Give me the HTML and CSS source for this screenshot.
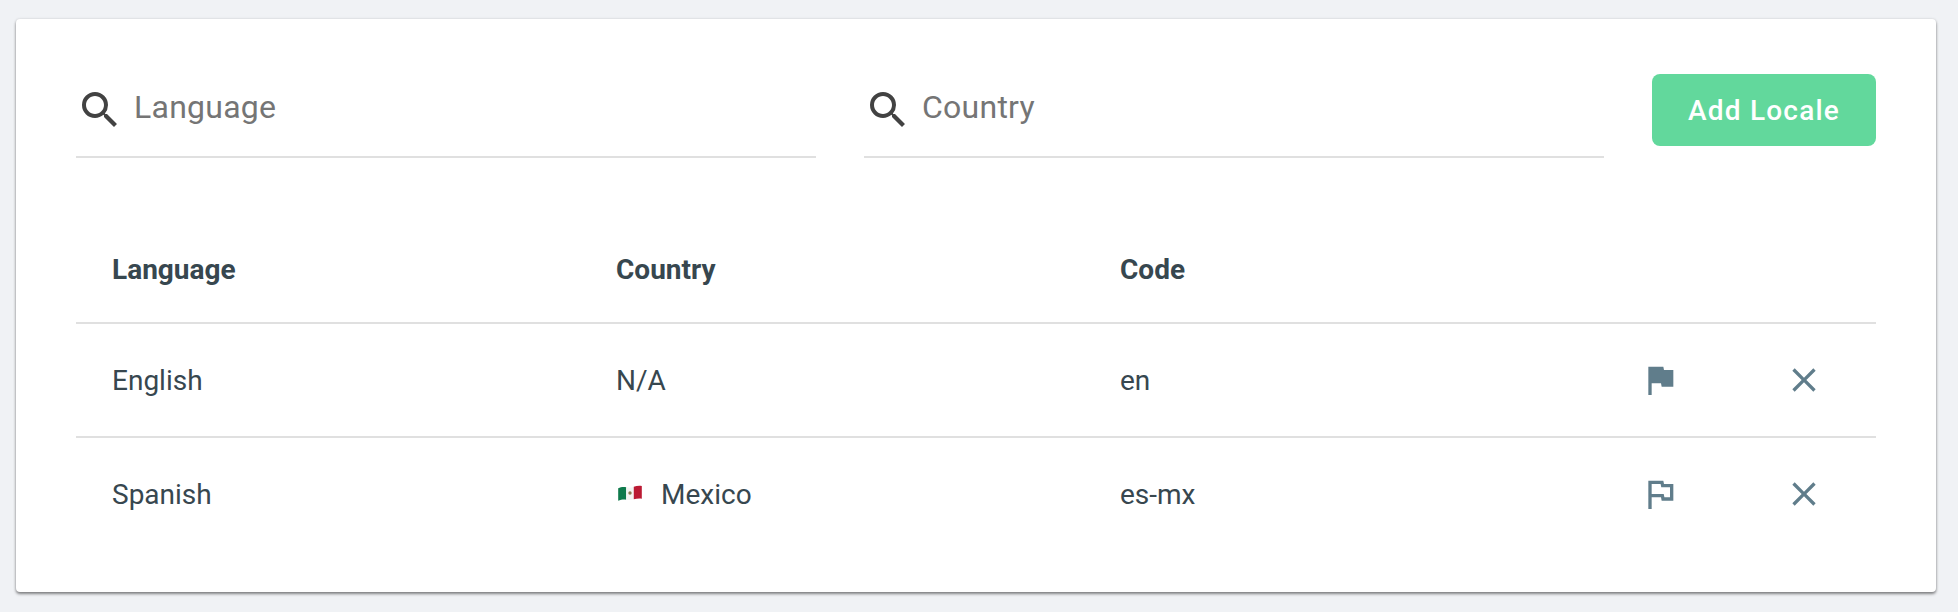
FILE: index.html
```html
<!DOCTYPE html>
<html lang="en">
<head>
<meta charset="utf-8">
<title>Locales</title>
<link rel="stylesheet" href="styles.css">
</head>
<body>
<main class="card">
  <div class="filters">
    <label class="search">
      <svg class="search-icon" viewBox="0 0 24 24"><path d="M15.5 14h-.79l-.28-.27A6.47 6.47 0 0 0 16 9.5 6.5 6.5 0 1 0 9.5 16c1.61 0 3.09-.59 4.23-1.57l.27.28v.79l5 4.99L20.49 19l-4.99-5zm-6 0C7.01 14 5 11.99 5 9.5S7.01 5 9.5 5 14 7.01 14 9.5 11.99 14 9.5 14z"/></svg>
      <input class="search-input" type="text" placeholder="Language">
    </label>
    <label class="search">
      <svg class="search-icon" viewBox="0 0 24 24"><path d="M15.5 14h-.79l-.28-.27A6.47 6.47 0 0 0 16 9.5 6.5 6.5 0 1 0 9.5 16c1.61 0 3.09-.59 4.23-1.57l.27.28v.79l5 4.99L20.49 19l-4.99-5zm-6 0C7.01 14 5 11.99 5 9.5S7.01 5 9.5 5 14 7.01 14 9.5 11.99 14 9.5 14z"/></svg>
      <input class="search-input" type="text" placeholder="Country">
    </label>
    <button class="add-btn" type="button">Add Locale</button>
  </div>
  <div class="table">
    <div class="row head">
      <div>Language</div><div>Country</div><div>Code</div>
    </div>
    <div class="row">
      <div>English</div><div>N/A</div><div>en</div>
      <svg class="act" viewBox="0 0 24 24"><path d="M14.4 6L14 4H5v17h2v-7h5.6l.4 2h7V6z"/></svg>
      <svg class="act" viewBox="0 0 24 24"><path d="M19 6.41L17.59 5 12 10.59 6.41 5 5 6.41 10.59 12 5 17.59 6.41 19 12 13.41 17.59 19 19 17.59 13.41 12z"/></svg>
    </div>
    <div class="row last">
      <div>Spanish</div>
      <div class="country">
        <svg class="mx" viewBox="0 0 25 18"><path fill="#0f7a4c" d="M0 3.5C3 2 6 2 8.500 2.500v13C6 15 3 15.200 0 16.800z"/><path fill="#f4f4f2" d="M8.500 2.500c2.700.5 5.500.4 8-.6v13.200c-2.500 1-5.300 1-8 .4z"/><path fill="#bb1a33" d="M16.500 1.900C19 1 22 .4 25 1v13.500c-3-.5-6 0-8.500.6z"/><circle cx="12.500" cy="8.500" r="1.800" fill="#8a7a50"/></svg>
        <span>Mexico</span>
      </div>
      <div>es-mx</div>
      <svg class="act" viewBox="0 0 24 24"><path d="M12.360 6l.4 2H18v6h-3.360l-.4-2H7V6h5.360M14 4H5v17h2v-7h5.600l.4 2h7V6h-5.600L14 4z"/></svg>
      <svg class="act" viewBox="0 0 24 24"><path d="M19 6.410L17.590 5 12 10.590 6.410 5 5 6.410 10.590 12 5 17.590 6.410 19 12 13.410 17.590 19 19 17.590 13.410 12z"/></svg>
    </div>
  </div>
</main>
</body>
</html>
```
FILE: styles.css
```css
* { box-sizing: border-box; }
html, body { height: 100%; }
body {
  margin: 0;
  padding: 19px 22px 20px 16px;
  background: #f0f2f5;
  font-family: Roboto, "Liberation Sans", sans-serif;
  color: #37474f;
}
.card {
  height: 573px;
  padding: 55px 60px 0;
  background: #fff;
  border-radius: 4px;
  box-shadow: 0 2px 3px rgba(0, 0, 0, .45), 0 0 3px rgba(0, 0, 0, .12);
}
.filters {
  display: grid;
  grid-template-columns: 740px 740px 224px;
  column-gap: 48px;
}
.search {
  display: flex;
  align-items: flex-start;
  height: 84px;
  padding-top: 12px;
  border-bottom: 2px solid #e0e0e0;
}
.search-icon { width: 48px; height: 48px; fill: #424242; flex: none; }
.search-input {
  flex: 1;
  min-width: 0;
  height: 42px;
  margin-left: 10px;
  border: 0;
  outline: 0;
  padding: 0;
  background: none;
  font: 400 32px Roboto, sans-serif;
  letter-spacing: .25px;
  color: #424242;
}
.search-input::placeholder { color: #757575; opacity: 1; }
.add-btn {
  height: 72px;
  border: 0;
  border-radius: 8px;
  background: #62d89c;
  color: #fff;
  font: 500 28px Roboto, sans-serif;
  letter-spacing: 1.2px;
}
.table { margin-top: 51px; }
.row {
  display: grid;
  grid-template-columns: 504px 504px 520px 144px 1fr;
  align-items: center;
  height: 114px;
  padding-left: 36px;
  border-bottom: 2px solid #e0e0e0;
  font-size: 28px;
}
.head { height: 115px; padding-top: 8px; font-weight: 700; }
.last { height: 112px; border-bottom: 0; }
.country { display: flex; align-items: center; gap: 19px; }
.mx { width: 24px; height: 17px; margin-left: 2px; margin-top: -2px; }
.act { width: 40px; height: 40px; fill: #607d8b; }
```
